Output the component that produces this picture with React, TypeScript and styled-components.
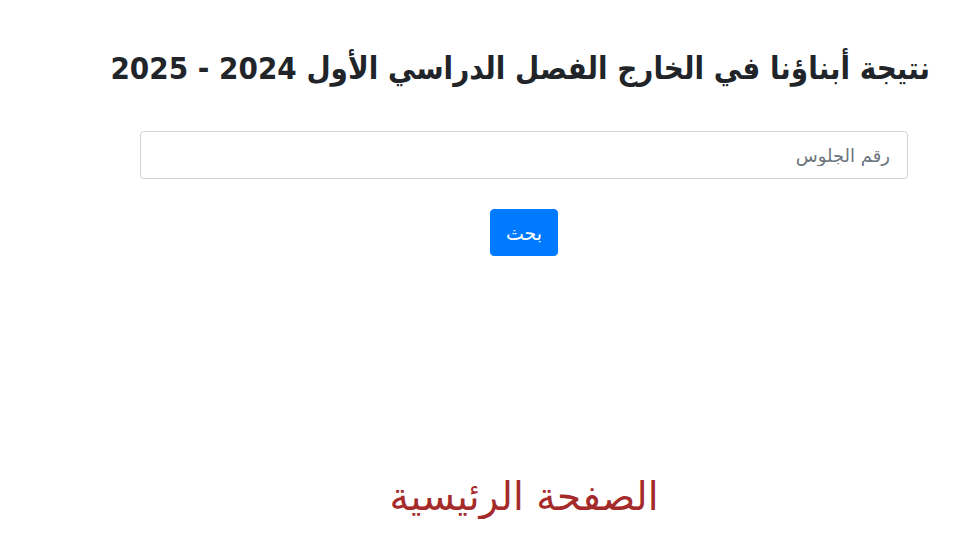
import React from 'react';
import styled, { createGlobalStyle } from 'styled-components';

const GlobalStyle = createGlobalStyle`
  html, body {
    margin: 0;
    padding: 0;
    background: #fff;
  }

  body {
    font-family: "Segoe UI", "DejaVu Sans", "Noto Sans", sans-serif;
    color: #212529;
    direction: rtl;
  }
`;

const Page = styled.div`
  display: flex;
  flex-direction: column;
  padding: 50px 28px 0 50px;
`;

const Title = styled.h2`
  margin: 0;
  font-family: "DejaVu Sans Condensed", "DejaVu Sans", sans-serif;
  font-stretch: condensed;
  font-size: 31px;
  font-weight: 700;
  line-height: 1.2;
  white-space: nowrap;
  color: #212529;
  text-align: right;
`;

const Content = styled.div`
  display: flex;
  flex-direction: column;
  align-items: center;
  margin: 0 22px 0 90px;
`;

const SearchForm = styled.form`
  display: flex;
  flex-direction: column;
  align-items: center;
  gap: 30px;
  width: 100%;
  margin-top: 44px;
`;

const SeatInput = styled.input`
  box-sizing: border-box;
  width: 100%;
  height: 48px;
  padding: 6px 17px;

  font-family: inherit;
  font-size: 18px;
  color: #495057;
  direction: rtl;

  border: 1px solid #ced4da;
  border-radius: 4px;
  outline: none;

  &::placeholder {
    color: #6c757d;
  }
`;

const SearchButton = styled.button`
  box-sizing: border-box;
  height: 47px;
  padding: 0 15px;

  font-family: inherit;
  font-size: 19px;
  font-weight: 400;
  color: #fff;

  background: #007bff;
  border: 1px solid #007bff;
  border-radius: 4px;
  cursor: pointer;
`;

const HomeLink = styled.a`
  margin-top: 218px;
  font-size: 39px;
  color: #a52a2a;
  text-decoration: none;
`;

const App = () => {
  return (
    <>
      <GlobalStyle />
      <Page>
        <Title>نتيجة أبناؤنا في الخارج الفصل الدراسي الأول 2024 - 2025</Title>
        <Content>
          <SearchForm onSubmit={e => e.preventDefault()}>
            <SeatInput type='text' placeholder='رقم الجلوس' />
            <SearchButton type='submit'>بحث</SearchButton>
          </SearchForm>
          <HomeLink href='#'>الصفحة الرئيسية</HomeLink>
        </Content>
      </Page>
    </>
  );
};

export default App;
